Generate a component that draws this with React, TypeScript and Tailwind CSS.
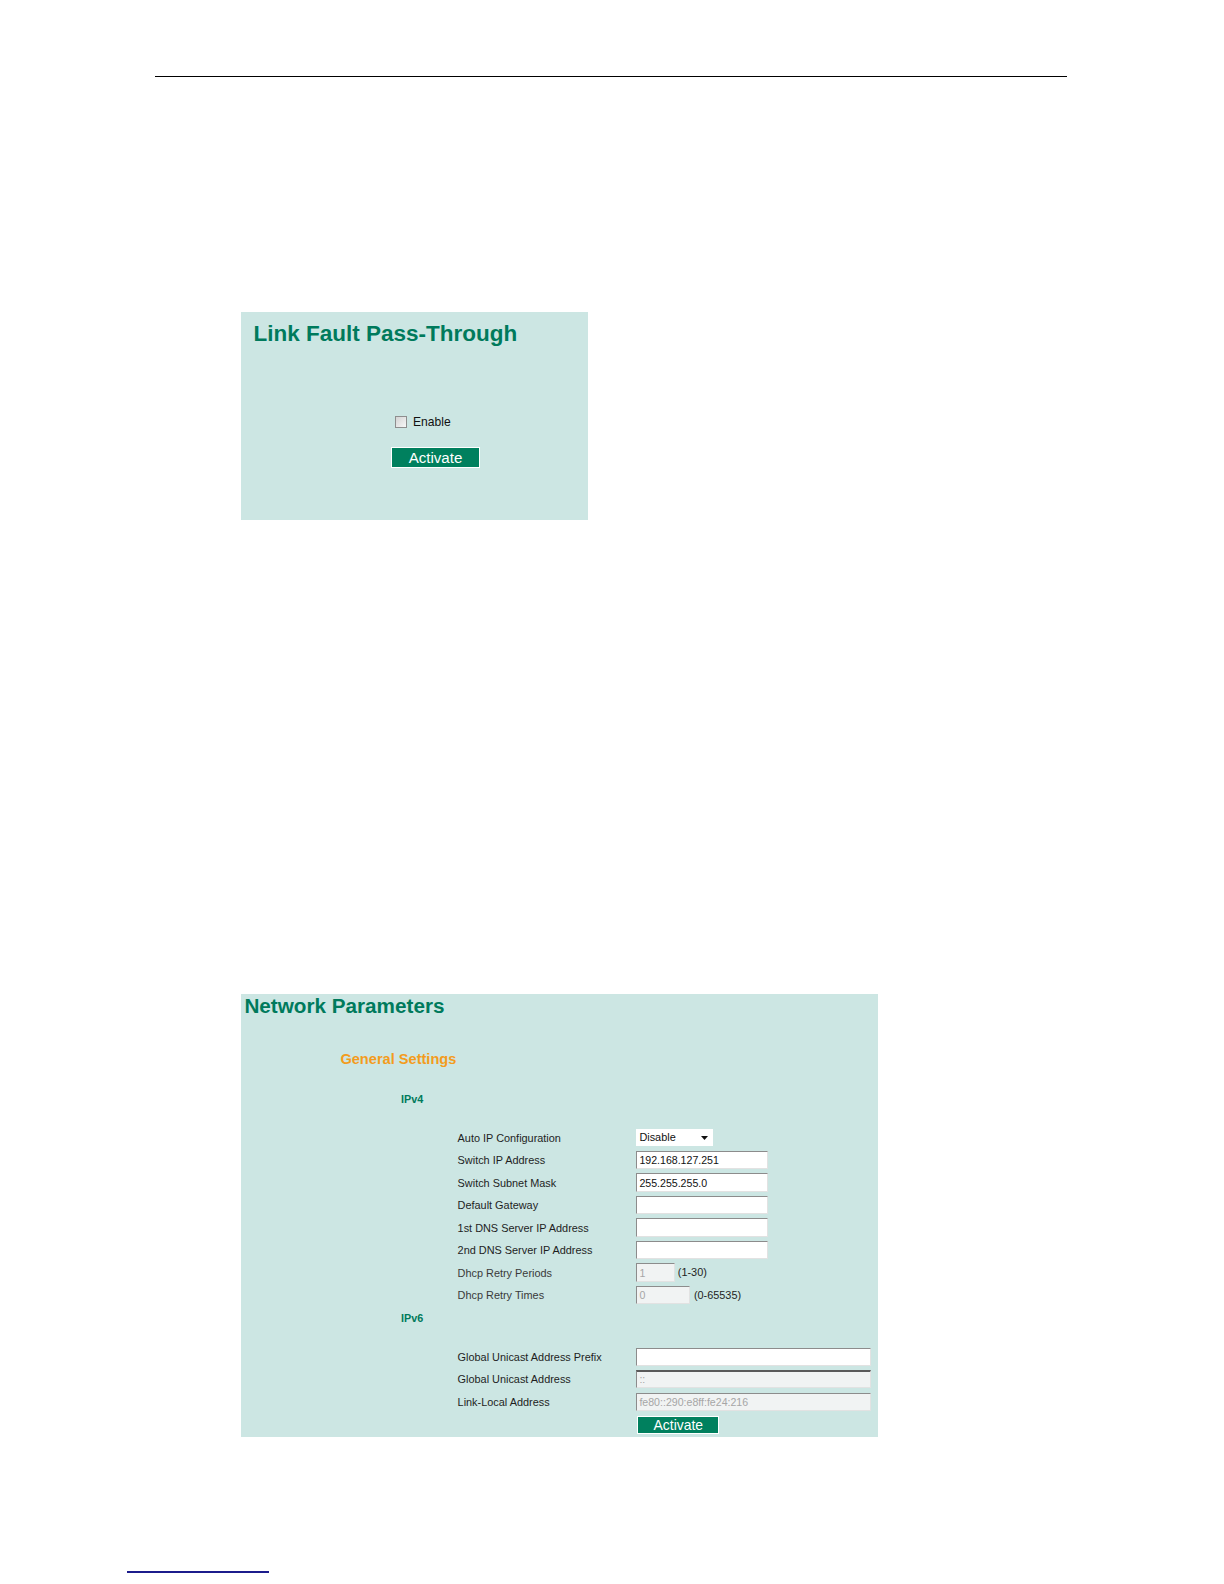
import React from "react";

function Field({
  width,
  value = "",
  disabled = false,
}: {
  width: number;
  value?: string;
  disabled?: boolean;
}) {
  return (
    <div
      className={
        "h-[18.2px] flex items-center px-[2px] text-[10.6px] leading-[18px] border border-t-[#8c8c8c] border-l-[#8c8c8c] border-r-[#e2e2e2] border-b-[#e2e2e2] whitespace-nowrap overflow-hidden " +
        (disabled ? "bg-[#f1f3f3] text-[#a6a6a6]" : "bg-white text-[#111]")
      }
      style={{ width }}
    >
      {value}
    </div>
  );
}

function Row({
  label,
  children,
  tall = false,
  dim = false,
}: {
  label: string;
  children: React.ReactNode;
  tall?: boolean;
  dim?: boolean;
}) {
  return (
    <div className={"flex items-center " + (tall ? "h-[22.7px]" : "h-[22.5px]")}>
      <div
        className={
          "w-[178.8px] text-[10.9px] leading-[14px] whitespace-nowrap " +
          (dim ? "text-[#3a3a3a]" : "text-[#1e1e1e]")
        }
      >
        {label}
      </div>
      {children}
    </div>
  );
}

export default function App() {
  return (
    <div className="relative w-[1224px] h-[1584px] bg-white font-['Liberation_Sans',Arial,sans-serif] overflow-hidden">
      {/* top rule */}
      <div className="pt-[75.5px] pl-[154.5px]">
        <div className="w-[912px] h-[1.5px] bg-black" />
      </div>

      {/* Link Fault Pass-Through panel */}
      <div className="mt-[235px] ml-[241.4px] w-[346.5px] h-[208px] bg-[#cce6e3] flex flex-col">
        <div className="pl-[12.1px] pt-[9.2px] text-[22.5px] leading-[26px] font-bold text-[#007a5c] whitespace-nowrap">
          Link Fault Pass-Through
        </div>
        <div className="mt-[67.8px] pl-[153.6px] h-[14px] flex items-center gap-[6px]">
          <div className="w-[12px] h-[12px] border border-[#8e8e8e] bg-gradient-to-br from-[#d4d4d4] to-[#f7f7f7]" />
          <span className="text-[12.1px] leading-[14px] text-[#111]">Enable</span>
        </div>
        <div className="mt-[18.5px] ml-[149.6px] w-[89px] h-[21px] bg-[#00805e] border-[1.5px] border-white flex items-center justify-center text-white text-[15.1px] leading-[18px]">
          Activate
        </div>
      </div>

      {/* Network Parameters panel */}
      <div className="mt-[474.2px] ml-[241.4px] w-[636.4px] h-[442.4px] bg-[#cce6e3] flex flex-col">
        <div className="pl-[3px] h-[24px] leading-[24px] text-[20.7px] font-bold text-[#007a5c] whitespace-nowrap">
          Network Parameters
        </div>
        <div className="mt-[30.6px] pl-[99px] leading-[20px] text-[14.6px] font-bold text-[#f39c1d] whitespace-nowrap">
          General Settings
        </div>
        <div className="mt-[22.4px] pl-[159.6px] leading-[16px] text-[10.8px] font-bold text-[#007a5c]">
          IPv4
        </div>
        <div className="mt-[19.1px] pl-[216.2px] flex flex-col">
          <Row label="Auto IP Configuration">
            <div className="w-[76.8px] h-[17.2px] bg-white flex items-center justify-between pl-[3px] pr-[5px] text-[10.9px] text-[#111]">
              <span>Disable</span>
              <svg width="7" height="4" viewBox="0 0 7 4">
                <path d="M0 0 L7 0 L3.5 4 Z" fill="#111" />
              </svg>
            </div>
          </Row>
          <Row label="Switch IP Address">
            <Field width={131.3} value="192.168.127.251" />
          </Row>
          <Row label="Switch Subnet Mask">
            <Field width={131.3} value="255.255.255.0" />
          </Row>
          <Row label="Default Gateway">
            <Field width={131.3} />
          </Row>
          <Row label="1st DNS Server IP Address">
            <Field width={131.3} />
          </Row>
          <Row label="2nd DNS Server IP Address">
            <Field width={131.3} />
          </Row>
          <Row label="Dhcp Retry Periods" dim>
            <Field width={38.4} value="1" disabled />
            <span className="ml-[3px] text-[10.9px] text-[#1e1e1e]">(1-30)</span>
          </Row>
          <Row label="Dhcp Retry Times" dim>
            <Field width={53.5} value="0" disabled />
            <span className="ml-[4px] text-[10.9px] text-[#1e1e1e]">(0-65535)</span>
          </Row>
        </div>
        <div className="mt-[4.1px] pl-[159.6px] leading-[16px] text-[10.8px] font-bold text-[#007a5c]">
          IPv6
        </div>
        <div className="mt-[19px] pl-[216.2px] flex flex-col">
          <Row label="Global Unicast Address Prefix" tall>
            <Field width={234.3} />
          </Row>
          <Row label="Global Unicast Address" tall>
            <div className="h-[18.2px] w-[234.3px] flex items-center px-[2px] text-[10.6px] bg-[#f1f3f3] text-[#a6a6a6] border-t-2 border-l border-t-[#5a5a5a] border-l-[#8c8c8c] border-r border-b border-r-[#e2e2e2] border-b-[#e2e2e2]">
              ::
            </div>
          </Row>
          <Row label="Link-Local Address" tall>
            <Field width={234.3} value="fe80::290:e8ff:fe24:216" disabled />
          </Row>
        </div>
        <div className="mt-[2.7px] ml-[396px] w-[81.8px] h-[18.3px] bg-[#00805e] border border-white flex items-center justify-center text-white text-[13.9px] leading-[16px]">
          Activate
        </div>
      </div>

      {/* footnote rule */}
      <div className="mt-[134.6px] ml-[127px] w-[142px] h-[1.5px] bg-[#1c1c8c]" />
    </div>
  );
}
